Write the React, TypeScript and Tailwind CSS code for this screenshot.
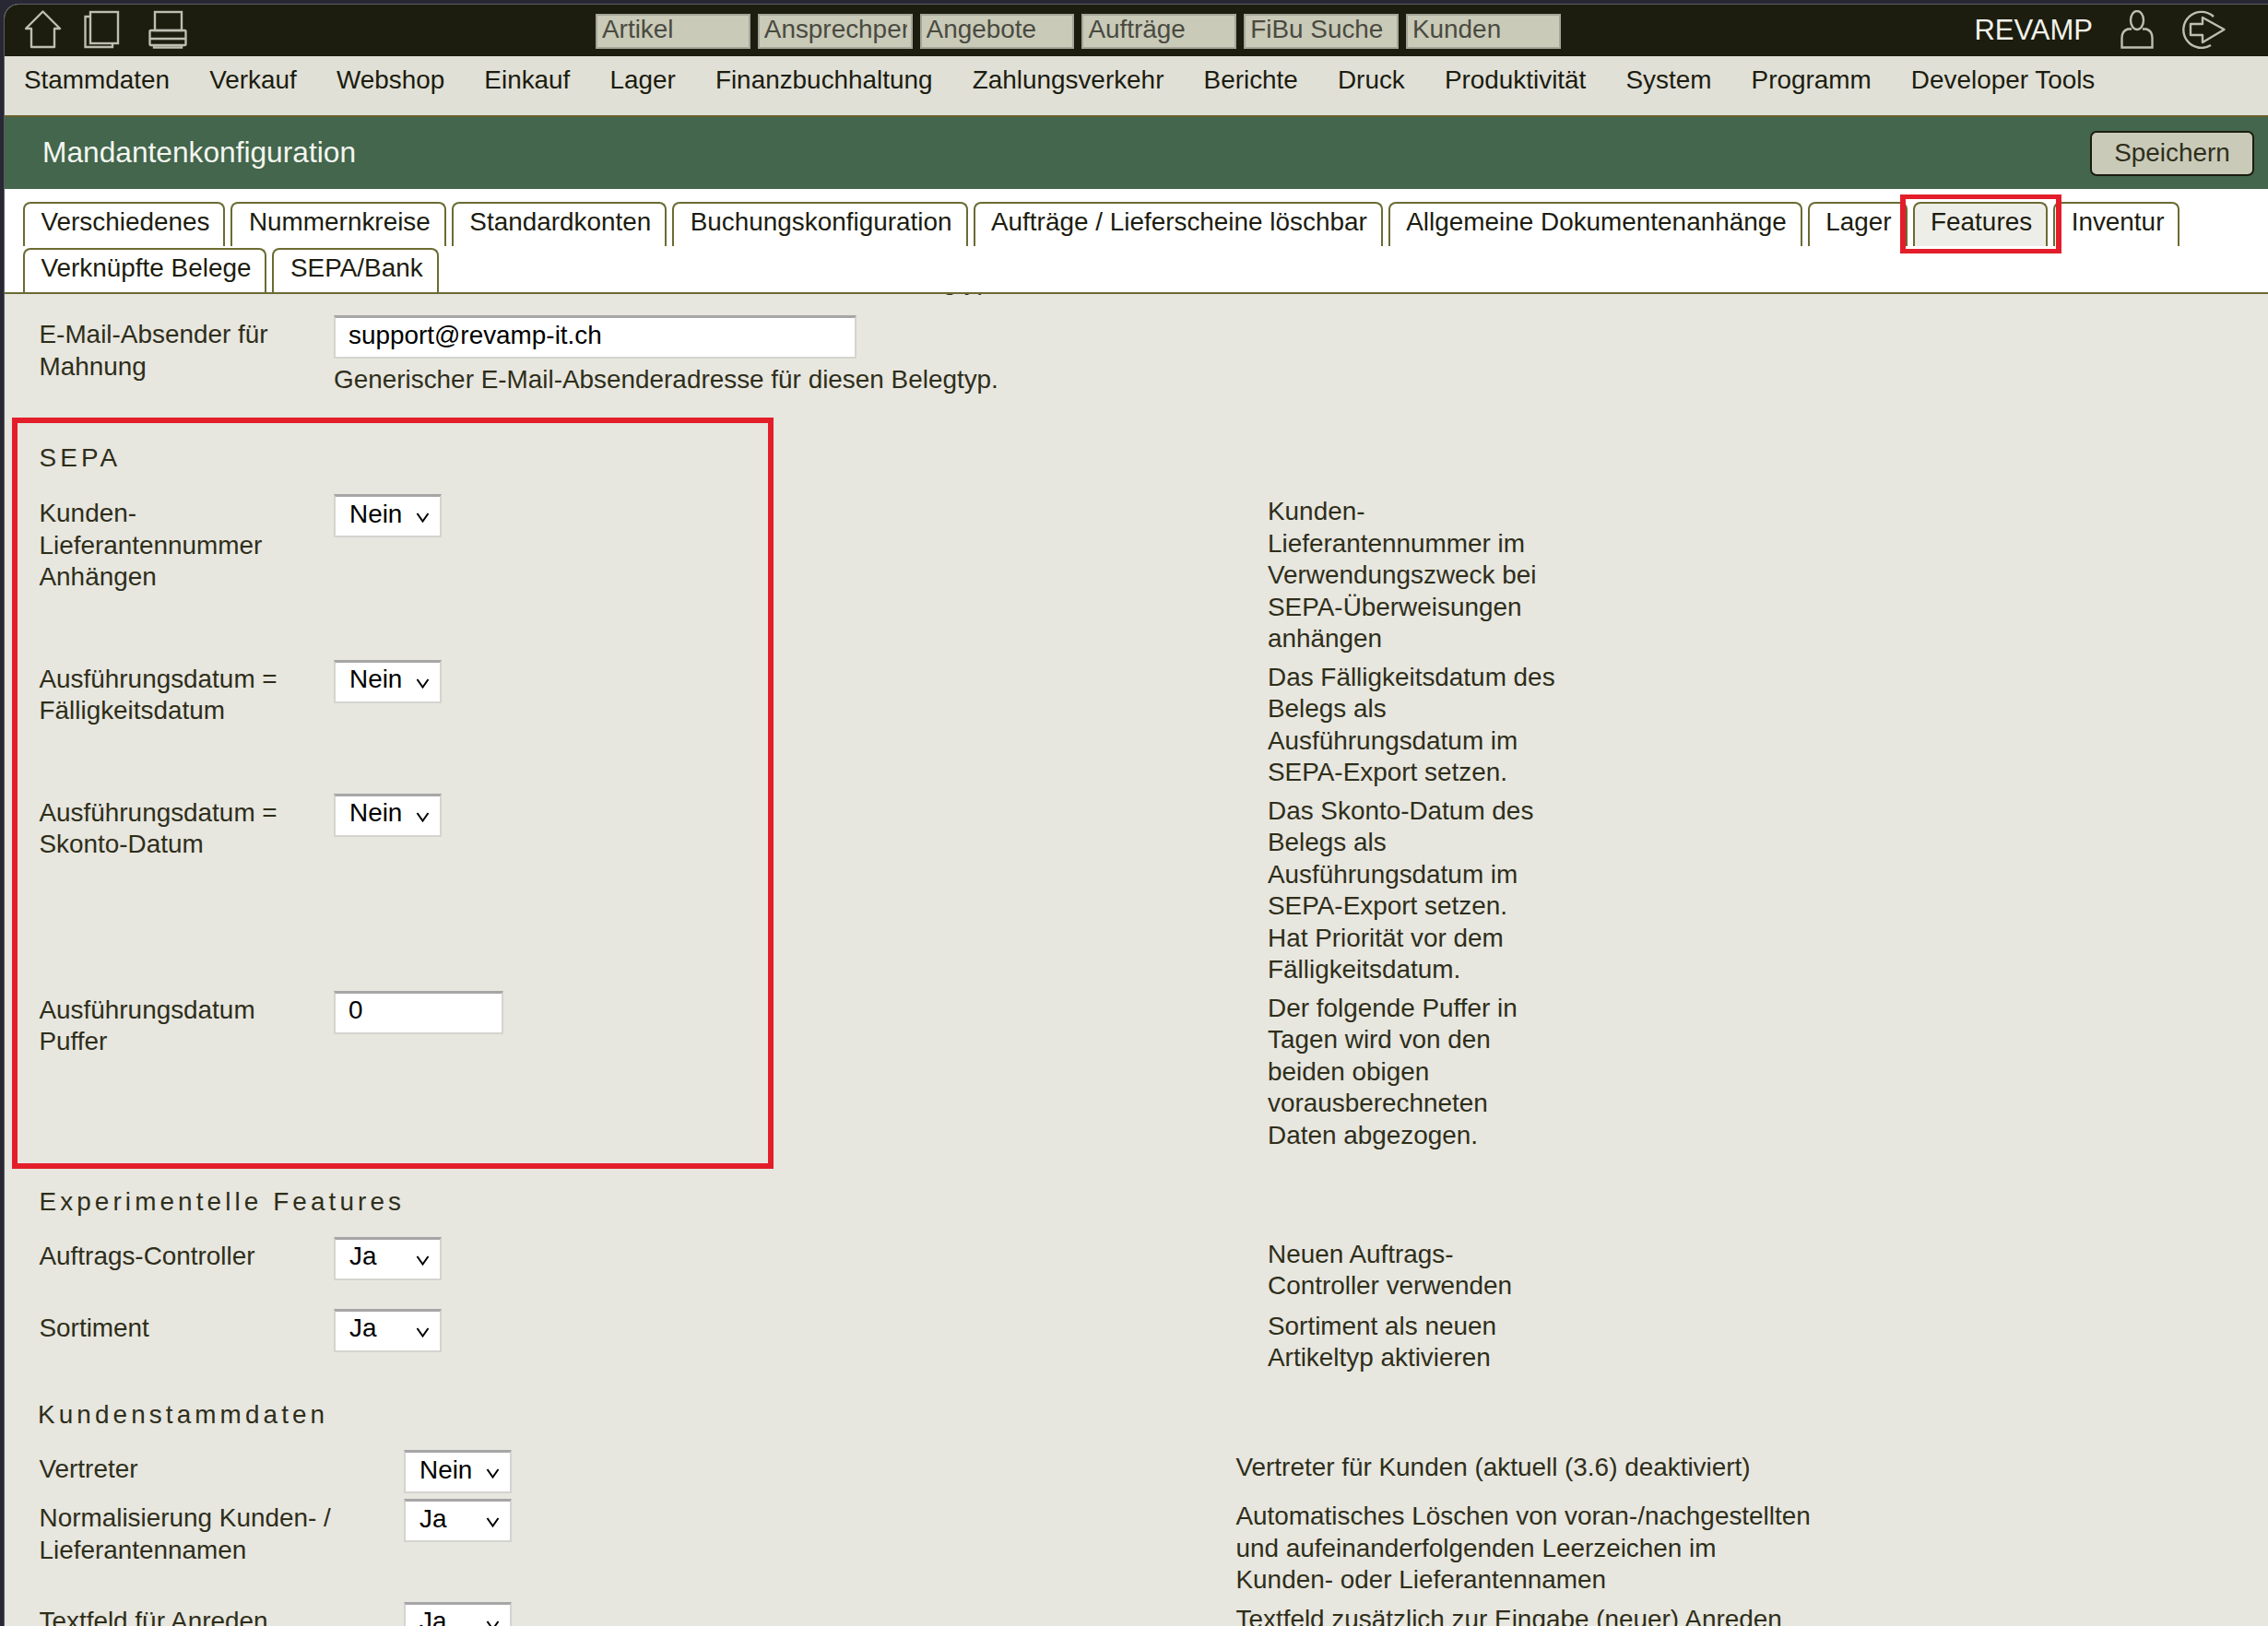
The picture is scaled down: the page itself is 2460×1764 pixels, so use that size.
import type { ReactNode } from "react";

const navItems = ["Stammdaten", "Verkauf", "Webshop", "Einkauf", "Lager", "Finanzbuchhaltung", "Zahlungsverkehr", "Berichte", "Druck", "Produktivität", "System", "Programm", "Developer Tools"];
const searchFields = ["Artikel", "Ansprechperson", "Angebote", "Aufträge", "FiBu Suche", "Kunden"];
const tabs = ["Verschiedenes", "Nummernkreise", "Standardkonten", "Buchungskonfiguration", "Aufträge / Lieferscheine löschbar", "Allgemeine Dokumentenanhänge", "Lager", "Features", "Inventur", "Verknüpfte Belege", "SEPA/Bank"];

const HomeIcon = () => (
  <svg width="40" height="42" viewBox="0 0 40 42" fill="none" stroke="#bdbdb2" strokeWidth="2.4" strokeLinejoin="round" className="shrink-0">
    <path d="M19.5 1.5 L38 20 H32 V40 H7 V20 H1 Z" />
  </svg>
);

const PagesIcon = () => (
  <svg width="40" height="42" viewBox="0 0 40 42" fill="none" stroke="#bdbdb2" strokeWidth="2.4" className="shrink-0">
    <rect x="7" y="2" width="30" height="34" />
    <path d="M7 7 H1.5 V40 H31 V36" />
  </svg>
);

const PrinterIcon = () => (
  <svg width="42" height="42" viewBox="0 0 42 42" fill="none" stroke="#bdbdb2" strokeWidth="2.4" className="shrink-0">
    <rect x="7" y="2" width="29" height="20" />
    <rect x="1.5" y="22" width="39" height="16" rx="1" />
    <path d="M1.5 31 H40.5" />
    <path d="M6 38 V40.5 H36 V38" />
  </svg>
);

const UserIcon = () => (
  <svg width="36" height="42" viewBox="0 0 36 42" fill="none" stroke="#bdbdb2" strokeWidth="2.4" className="shrink-0">
    <ellipse cx="18" cy="11" rx="7" ry="10" />
    <path d="M12 20.5 H8 C3.5 22 1.5 26 1.5 30 V40.5 H34.5 V30 C34.5 26 32.5 22 28 20.5 H24" />
  </svg>
);

const ExitIcon = () => (
  <svg width="50" height="42" viewBox="0 0 50 42" fill="none" stroke="#bdbdb2" strokeWidth="2.4" strokeLinejoin="round" className="shrink-0">
    <path d="M33 38 A19.5 19.5 0 1 1 36 7" />
    <path d="M11 15 H24 V8 L47.5 21 L24 35 V27 H11 Z" />
  </svg>
);

const Chevron = () => (
  <svg width="15" height="11" viewBox="0 0 15 11" fill="none" stroke="#000" strokeWidth="2" className="absolute right-[11px] top-[17px]">
    <path d="M1.5 1 L7.5 9.5 L13.5 1" />
  </svg>
);

const Select = ({ value }: { value: string }) => (
  <div className="relative flex h-[47px] w-[117px] items-center border-2 border-[#d4d4d0] border-t-[3px] border-t-[#a6a6a6] bg-white pb-[4px] pl-[15px] text-black">
    {value}
    <Chevron />
  </div>
);

const TextInput = ({ value, width }: { value: string; width: string }) => (
  <div className={`flex h-[47px] items-center border-2 border-[#d4d4d0] border-t-[3px] border-t-[#a6a6a6] bg-white pb-[4px] pl-[14px] text-black ${width}`}>
    {value}
  </div>
);

const Heading = ({ children, className }: { children: ReactNode; className: string }) => (
  <h2 className={`tracking-[4.1px] ${className}`}>{children}</h2>
);

type RowProps = {
  label: string;
  desc: string;
  control: ReactNode;
  cols: string;
  pb: string;
};

const Row = ({ label, desc, control, cols, pb }: RowProps) => (
  <div className={`grid ${cols} ${pb}`}>
    <div className="whitespace-pre-line pt-[4px]">{label}</div>
    <div>{control}</div>
    <div className="whitespace-pre-line pt-[2px]">{desc}</div>
  </div>
);

const sepaCols = "grid-cols-[319.5px_1013px_1fr]";
const kundenCols = "grid-cols-[395.5px_902.5px_1fr]";

const App = () => {
  return (
    <div className="h-[1764px] w-[2460px] overflow-hidden bg-[#282834] pl-[4px] pt-[4px] font-['Liberation_Sans',sans-serif] text-[27.9px] leading-[34.5px] text-[#2e2e1a]">
      <div className="flex h-full flex-col overflow-hidden rounded-tl-[16px] border-l border-t border-[#5c5c64] bg-[#e7e6df]">
        <div className="flex h-[56px] shrink-0 items-start bg-[#1c1c0f] pt-[6px]">
          <div className="flex w-[641px] shrink-0 items-start pl-[22px]">
            <HomeIcon />
            <div className="ml-[24px]"><PagesIcon /></div>
            <div className="ml-[30px]"><PrinterIcon /></div>
          </div>
          <div className="mt-[4px] flex gap-[8px]">
            {searchFields.map((field) => (
              <div key={field} className="h-[38px] w-[167.8px] border-2 border-[#a5a59a] bg-[#c9cab8] pl-[5px] pr-[4px] leading-[30px] text-[#4a4a40]">
                <div className="overflow-hidden whitespace-nowrap">{field}</div>
              </div>
            ))}
          </div>
          <div className="ml-auto flex items-start pr-[45px]">
            <span className="mr-[30px] mt-[5px] text-[31px] text-[#f2f2ea]">REVAMP</span>
            <UserIcon />
            <div className="ml-[29px]"><ExitIcon /></div>
          </div>
        </div>

        <nav className="flex h-[66px] shrink-0 gap-[43.1px] border-b-2 border-[#6b5f2c] bg-[#e0e0d7] pl-[21px] pt-[9px] text-[#1c1c0f]">
          {navItems.map((item) => (
            <span key={item}>{item}</span>
          ))}
        </nav>

        <div className="flex h-[78px] shrink-0 items-center justify-between bg-[#43664c] pl-[41px] pr-[15px]">
          <h1 className="pb-[2px] text-[31.7px] font-normal text-[#f4f6f0]">Mandantenkonfiguration</h1>
          <button className="h-[49px] w-[178px] rounded-[7px] border-2 border-[#1c1c0f] bg-[#c9cab8] text-[#2e2e1a]">Speichern</button>
        </div>

        <div className="flex h-[114px] shrink-0 flex-wrap content-start gap-x-[6px] gap-y-[2px] border-b-2 border-[#6b6b33] bg-white pl-[20px] pt-[14px] text-[#1c1c0f]">
          {tabs.map((tab) => (
            <div
              key={tab}
              className={
                tab === "Features"
                  ? "relative h-[48px] rounded-t-[8px] border-2 border-b-0 border-[#6b6b33] bg-[#eeeee8] pl-[17.5px] pr-[15px] pt-[3px]"
                  : "relative h-[48px] rounded-t-[8px] border-2 border-b-0 border-[#6b6b33] bg-white pl-[17.5px] pr-[15px] pt-[3px]"
              }
            >
              {tab}
              {tab === "Features" && (
                <div className="pointer-events-none absolute bottom-[-8px] left-[-16px] right-[-17px] top-[-10px] z-10 border-x-[6px] border-y-[5px] border-[#e31e2a]" />
              )}
            </div>
          ))}
        </div>

        <div className="flex-1 overflow-hidden pl-[37.5px]">
          <p className="ml-[319.5px] mt-[-31px]">Generischer E-Mail-Absenderadresse für diesen Belegtyp.</p>

          <div className="mt-[19.5px] grid grid-cols-[319.5px_1fr]">
            <div className="whitespace-pre-line pt-[4px]">{"E-Mail-Absender für\nMahnung"}</div>
            <div>
              <TextInput value="support@revamp-it.ch" width="w-[567px]" />
              <p className="mt-[6px]">Generischer E-Mail-Absenderadresse für diesen Belegtyp.</p>
            </div>
          </div>

          <section className="relative mt-[50.5px]">
            <div className="pointer-events-none absolute bottom-[-13.5px] left-[-29.5px] top-[-27px] w-[826px] border-[6px] border-[#e31e2a]" />
            <Heading className="mb-[21.5px]">SEPA</Heading>
            <Row
              cols={sepaCols}
              pb="pb-[5px]"
              label={"Kunden-\nLieferantennummer\nAnhängen"}
              control={<Select value="Nein" />}
              desc={"Kunden-\nLieferantennummer im\nVerwendungszweck bei\nSEPA-Überweisungen\nanhängen"}
            />
            <Row
              cols={sepaCols}
              pb="pb-[5px]"
              label={"Ausführungsdatum =\nFälligkeitsdatum"}
              control={<Select value="Nein" />}
              desc={"Das Fälligkeitsdatum des\nBelegs als\nAusführungsdatum im\nSEPA-Export setzen."}
            />
            <Row
              cols={sepaCols}
              pb="pb-[5px]"
              label={"Ausführungsdatum =\nSkonto-Datum"}
              control={<Select value="Nein" />}
              desc={"Das Skonto-Datum des\nBelegs als\nAusführungsdatum im\nSEPA-Export setzen.\nHat Priorität vor dem\nFälligkeitsdatum."}
            />
            <Row
              cols={sepaCols}
              pb="pb-[5px]"
              label={"Ausführungsdatum\nPuffer"}
              control={<TextInput value="0" width="w-[184px]" />}
              desc={"Der folgende Puffer in\nTagen wird von den\nbeiden obigen\nvorausberechneten\nDaten abgezogen."}
            />
          </section>

          <Heading className="mb-[20px] mt-[33px]">Experimentelle Features</Heading>
          <Row
            cols={sepaCols}
            pb="pb-[7px]"
            label="Auftrags-Controller"
            control={<Select value="Ja" />}
            desc={"Neuen Auftrags-\nController verwenden"}
          />
          <Row
            cols={sepaCols}
            pb="pb-[7px]"
            label="Sortiment"
            control={<Select value="Ja" />}
            desc={"Sortiment als neuen\nArtikeltyp aktivieren"}
          />

          <Heading className="mb-[21px] ml-[-1.5px] mt-[20px]">Kundenstammdaten</Heading>
          <Row
            cols={kundenCols}
            pb="pb-[6px]"
            label="Vertreter"
            control={<Select value="Nein" />}
            desc="Vertreter für Kunden (aktuell (3.6) deaktiviert)"
          />
          <Row
            cols={kundenCols}
            pb="pb-[6px]"
            label={"Normalisierung Kunden- /\nLieferantennamen"}
            control={<Select value="Ja" />}
            desc={"Automatisches Löschen von voran-/nachgestellten\nund aufeinanderfolgenden Leerzeichen im\nKunden- oder Lieferantennamen"}
          />
          <Row
            cols={kundenCols}
            pb="pb-[6px]"
            label="Textfeld für Anreden"
            control={<Select value="Ja" />}
            desc="Textfeld zusätzlich zur Eingabe (neuer) Anreden"
          />
        </div>
      </div>
    </div>
  );
};

export default App;
